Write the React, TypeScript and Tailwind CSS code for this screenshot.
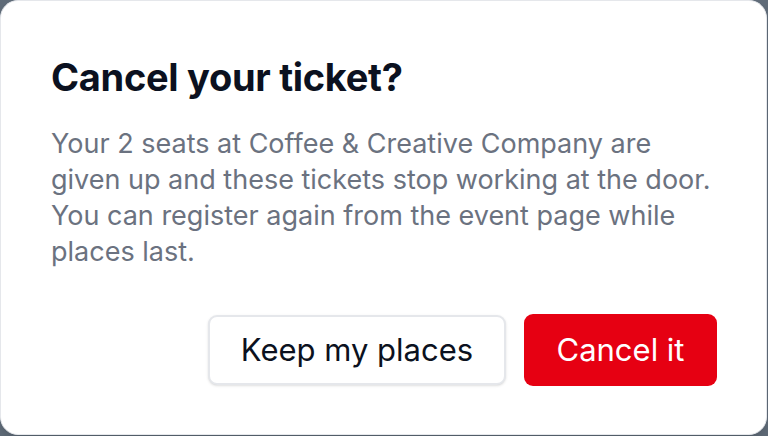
import React from 'react'

const bodyLines = [
  'Your 2 seats at Coffee & Creative Company are',
  'given up and these tickets stop working at the door.',
  'You can register again from the event page while',
  'places last.',
]

export default function App() {
  return (
    <div className="w-[768px] h-[436px] bg-[#5f6b78] font-['Inter','Liberation_Sans',sans-serif]">
      <div className="w-[767px] h-[435px] bg-white rounded-[18px] border border-[#e5e7eb] shadow-lg pt-[53px] pl-[50px] pr-[49px] flex flex-col">
        <h2 className="text-[38px] leading-[46px] font-bold text-[#0b1120] tracking-[-0.3px]">Cancel your ticket?</h2>
        <p className="mt-[26px] text-[27px] leading-[36px] text-[#6b7280]">
          {bodyLines.map((line) => (
            <span key={line} className="block whitespace-nowrap">
              {line}
            </span>
          ))}
        </p>
        <div className="mt-[45px] flex justify-end gap-[18px]">
          <button className="h-[70px] w-[298px] rounded-[9px] border-2 border-[#e5e7eb] bg-white text-[31px] text-[#0b1120] shadow-sm">
            Keep my places
          </button>
          <button className="h-[72px] w-[193px] -mt-px rounded-[9px] bg-[#e60012] text-[31px] text-white">Cancel it</button>
        </div>
      </div>
    </div>
  )
}
